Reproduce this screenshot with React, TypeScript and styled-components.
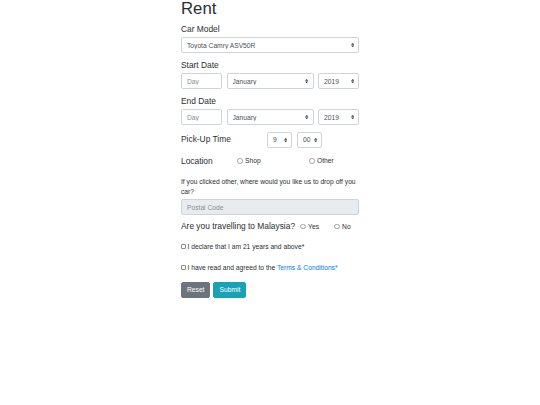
import React from "react";
import styled, { createGlobalStyle } from "styled-components";

const GlobalStyle = createGlobalStyle`
  body {
    margin: 0;
    background: #fff;
    font-family: "Liberation Sans", Arial, sans-serif;
    color: #2a2e33;
  }
  * {
    box-sizing: border-box;
  }
`;

const Wrapper = styled.form`
  width: 178px;
  margin: 0 auto;
  font-size: 6.7px;
  line-height: 1.5;
`;

const Title = styled.h1`
  font-size: 16.8px;
  font-weight: 400;
  line-height: 20px;
  margin: -1px 0 3.5px;
`;

const Group = styled.div<{ $mb?: number }>`
  margin-bottom: ${(p) => (p.$mb ?? 5.5)}px;
`;

const Label = styled.label`
  display: block;
  font-size: 8.4px;
  line-height: 12.6px;
  margin-bottom: 2px;
`;

const InlineLabel = styled.label<{ $w?: number }>`
  font-size: 8.4px;
  line-height: 12.6px;
  width: ${(p) => (p.$w ? `${p.$w}px` : "auto")};
  flex: none;
`;

const DateRow = styled.div`
  display: grid;
  grid-template-columns: 41px 1fr 41px;
  gap: 0 4.5px;
`;

const Field = styled.input`
  display: block;
  width: 100%;
  height: 16px;
  padding: 0 5px;
  border: 1px solid #ced4da;
  border-radius: 2px;
  font-family: inherit;
  font-size: 6.7px;
  color: #495057;
  background: #fff;
  outline: none;
  &::placeholder {
    color: #868e96;
  }
  &:disabled {
    background: #e9ecef;
  }
`;

const SelectBox = styled.div<{ $w?: number }>`
  position: relative;
  width: ${(p) => (p.$w ? `${p.$w}px` : "100%")};
  flex: none;
`;

const Select = styled.select<{ $compact?: boolean }>`
  display: block;
  width: 100%;
  height: 16px;
  padding: ${(p) => (p.$compact ? "0 0 0 5px" : "0 12px 0 5px")};
  border: 1px solid #ced4da;
  border-radius: 2px;
  font-family: inherit;
  font-size: 6.7px;
  color: #495057;
  background: #fff;
  appearance: none;
  outline: none;
`;

const Arrow = styled.svg`
  position: absolute;
  right: 5px;
  top: 6px;
  width: 3.4px;
  height: 4.2px;
  pointer-events: none;
`;

const TimeRow = styled.div`
  display: flex;
  align-items: center;
  gap: 5px;
  margin-bottom: 7px;
`;

const RadioRow = styled.div<{ $mt?: number }>`
  display: flex;
  align-items: center;
  margin-top: ${(p) => (p.$mt ?? 0)}px;
`;

const RadioItem = styled.label<{ $w?: number; $ml?: number }>`
  display: flex;
  align-items: center;
  gap: 2.5px;
  width: ${(p) => (p.$w ? `${p.$w}px` : "auto")};
  margin-left: ${(p) => (p.$ml ?? 0)}px;
  font-size: 6.7px;
  flex: none;
`;

const Radio = styled.input`
  appearance: none;
  margin: 0;
  width: 5.5px;
  height: 5.5px;
  border: 0.6px solid #a0a0a0;
  border-radius: 50%;
  background: #fff;
`;

const Note = styled.p`
  font-size: 6.7px;
  line-height: 10px;
  margin: 10px 0 2px;
`;

const CheckRow = styled.label<{ $mt: number }>`
  display: flex;
  align-items: center;
  gap: 1.5px;
  margin-top: ${(p) => p.$mt}px;
  font-size: 6.7px;
  line-height: 10px;
`;

const Check = styled.input`
  appearance: none;
  margin: 0;
  width: 5px;
  height: 5px;
  border: 0.6px solid #8a8a8a;
  border-radius: 1px;
  background: #fff;
`;

const Link = styled.a`
  color: #007bff;
  text-decoration: none;
`;

const Buttons = styled.div`
  display: flex;
  gap: 3px;
  margin-top: 9px;
`;

const Btn = styled.button<{ $variant: "secondary" | "info" }>`
  height: 16px;
  padding: 0 5px;
  border: 1px solid ${(p) => (p.$variant === "info" ? "#17a2b8" : "#6c757d")};
  border-radius: 2px;
  background: ${(p) => (p.$variant === "info" ? "#17a2b8" : "#6c757d")};
  color: #fff;
  font-family: inherit;
  font-size: 6.7px;
`;

const Caret = () => (
  <Arrow viewBox="0 0 4 5">
    <path d="M2 0L0 2h4zm0 5L0 3h4z" fill="#343a40" />
  </Arrow>
);

const Dropdown: React.FC<{ options: string[]; width?: number }> = ({ options, width }) => (
  <SelectBox $w={width}>
    <Select $compact={!!width} defaultValue={options[0]}>
      {options.map((o) => (
        <option key={o}>{o}</option>
      ))}
    </Select>
    <Caret />
  </SelectBox>
);

const months = [
  "January", "February", "March", "April", "May", "June",
  "July", "August", "September", "October", "November", "December",
];

const DateFields = () => (
  <DateRow>
    <Field placeholder="Day" />
    <Dropdown options={months} />
    <Dropdown options={["2019", "2020"]} />
  </DateRow>
);

export default function App() {
  return (
    <>
      <GlobalStyle />
      <Wrapper onSubmit={(e) => e.preventDefault()}>
        <Title>Rent</Title>
        <Group>
          <Label>Car Model</Label>
          <Dropdown options={["Toyota Camry ASV50R"]} />
        </Group>
        <Group>
          <Label>Start Date</Label>
          <DateFields />
        </Group>
        <Group $mb={6.5}>
          <Label>End Date</Label>
          <DateFields />
        </Group>
        <TimeRow>
          <InlineLabel $w={81}>Pick-Up Time</InlineLabel>
          <Dropdown width={25} options={["9", "10", "11"]} />
          <Dropdown width={25} options={["00", "30"]} />
        </TimeRow>
        <RadioRow>
          <InlineLabel $w={56}>Location</InlineLabel>
          <RadioItem $w={72}>
            <Radio type="radio" name="location" />
            Shop
          </RadioItem>
          <RadioItem>
            <Radio type="radio" name="location" />
            Other
          </RadioItem>
        </RadioRow>
        <Note>If you clicked other, where would you like us to drop off you car?</Note>
        <Field placeholder="Postal Code" disabled />
        <RadioRow $mt={5}>
          <InlineLabel>Are you travelling to Malaysia?</InlineLabel>
          <RadioItem $w={34} $ml={5}>
            <Radio type="radio" name="malaysia" />
            Yes
          </RadioItem>
          <RadioItem>
            <Radio type="radio" name="malaysia" />
            No
          </RadioItem>
        </RadioRow>
        <CheckRow $mt={9}>
          <Check type="checkbox" />
          I declare that I am 21 years and above*
        </CheckRow>
        <CheckRow $mt={11}>
          <Check type="checkbox" />
          <span>
            I have read and agreed to the <Link href="#">Terms &amp; Conditions*</Link>
          </span>
        </CheckRow>
        <Buttons>
          <Btn type="reset" $variant="secondary">Reset</Btn>
          <Btn type="submit" $variant="info">Submit</Btn>
        </Buttons>
      </Wrapper>
    </>
  );
}
